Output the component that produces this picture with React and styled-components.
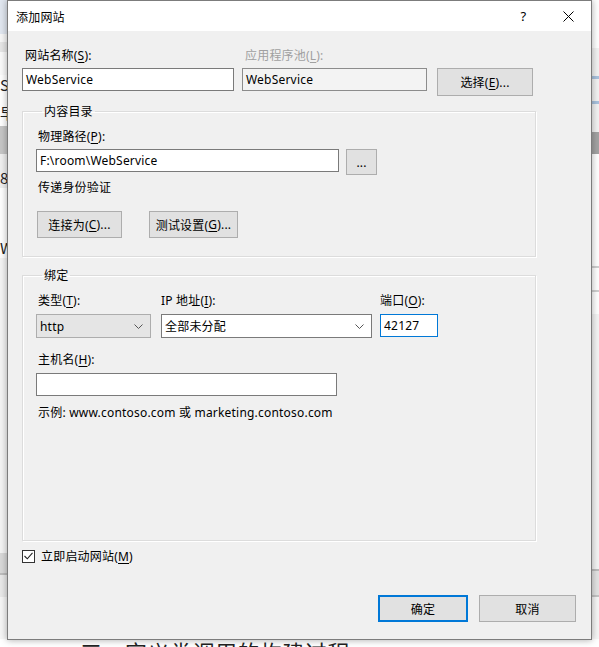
import React from 'react';
import styled, { createGlobalStyle } from 'styled-components';

const GlobalStyle = createGlobalStyle`
  html, body {
    margin: 0;
    padding: 0;
    background: #ffffff;
  }
  body {
    font-family: "Noto Sans", "Noto Sans CJK SC", sans-serif;
    font-size: 12px;
    letter-spacing: 0.2px;
    color: #000;
  }
`;

const Desktop = styled.div`
  position: relative;
  width: 599px;
  height: 647px;
  overflow: hidden;
  background: #ffffff;
`;

// the page behind the dialog
const BackPage = styled.div`
  display: flex;
  flex-direction: column;
  height: 100%;
`;

const BackTop = styled.div`
  display: flex;
  justify-content: space-between;
  height: 639px;
  flex-shrink: 0;
`;

const Strip = styled.div`
  display: flex;
  flex-direction: column;
  width: 40px;
  background: #f4f4f4;
`;

const StripBlock = styled.div`
  height: ${(p) => p.$h}px;
  flex-shrink: 0;
  width: 100%;
  background: ${(p) => p.$bg || 'transparent'};
  color: ${(p) => p.$color || '#222'};
  font-family: "Noto Sans CJK SC", sans-serif;
  font-size: 15px;
  font-weight: ${(p) => (p.$bold ? 700 : 400)};
  line-height: ${(p) => p.$h}px;
  padding-left: ${(p) => (p.$right ? 1 : 0)}px;
  text-align: ${(p) => (p.$right ? 'left' : 'right')};
  padding-right: ${(p) => (p.$right ? 0 : 33)}px;
  white-space: nowrap;
  overflow: hidden;
  box-sizing: border-box;
`;

const StripFill = styled.div`
  flex: 1;
  width: 100%;
`;

const Heading = styled.div`
  padding-left: 80px;
  margin-top: 0;
  font-family: "Noto Sans CJK SC", sans-serif;
  font-size: 22px;
  line-height: 24px;
  color: #222;
  white-space: nowrap;
  letter-spacing: 0.5px;
`;

const Dialog = styled.div`
  position: absolute;
  left: 7px;
  top: 0;
  width: 585px;
  height: 640px;
  box-sizing: border-box;
  border: 1px solid #7c7c7c;
  background: #f0f0f0;
  box-shadow: 0 0 7px rgba(0, 0, 0, 0.35);
  display: flex;
  flex-direction: column;
`;

const TitleBar = styled.div`
  height: 30px;
  background: #ffffff;
  display: flex;
  align-items: center;
  flex-shrink: 0;
`;

const Title = styled.div`
  flex: 1;
  padding-left: 8px;
  font-family: "Noto Sans CJK SC", sans-serif;
  font-size: 12px;
`;

const TitleButton = styled.div`
  width: 45px;
  height: 30px;
  display: flex;
  align-items: center;
  justify-content: center;
  font-size: 13px;
`;

const Body = styled.div`
  display: flex;
  flex-direction: column;
  padding: 17px 14px 0 14px;
  flex: 1;
`;

const Mn = styled.span`
  text-decoration: underline;
  text-underline-offset: 2px;
`;

const Label = styled.div`
  line-height: 16px;
  height: 16px;
  padding-left: ${(p) => p.$indent ?? 2}px;
  color: ${(p) => (p.$disabled ? '#a0a0a0' : '#000')};
  white-space: nowrap;
  margin-top: ${(p) => p.$mt || 0}px;
`;

const Field = styled.div`
  display: flex;
  flex-direction: column;
  gap: ${(p) => p.$gap || 4}px;
  width: ${(p) => p.$w}px;
  flex-shrink: 0;
  margin-left: ${(p) => p.$ml || 0}px;
`;

const TextBox = styled.div`
  box-sizing: border-box;
  width: ${(p) => p.$w}px;
  height: ${(p) => p.$h || 23}px;
  border: 1px solid ${(p) => (p.$focus ? '#0078d7' : p.$disabled ? '#8c8c8c' : '#7a7a7a')};
  background: ${(p) => (p.$disabled ? '#f3f3f3' : '#ffffff')};
  padding-left: 3px;
  display: flex;
  align-items: center;
  white-space: nowrap;
  font-size: 12px;
`;

const Select = styled.div`
  box-sizing: border-box;
  width: ${(p) => p.$w}px;
  height: 24px;
  border: 1px solid ${(p) => (p.$gray ? '#adadad' : '#7a7a7a')};
  background: ${(p) => (p.$gray ? '#e5e5e5' : '#ffffff')};
  padding: 0 7px 0 3px;
  display: flex;
  align-items: center;
  justify-content: space-between;
  font-size: 12px;
`;

const Button = styled.div`
  box-sizing: border-box;
  width: ${(p) => p.$w}px;
  height: ${(p) => p.$h || 27}px;
  border: ${(p) => (p.$primary ? '2px solid #0078d7' : '1px solid #adadad')};
  background: #e1e1e1;
  display: flex;
  align-items: center;
  justify-content: center;
  white-space: nowrap;
  flex-shrink: 0;
  margin-left: ${(p) => p.$ml || 0}px;
`;

const TopRow = styled.div`
  display: flex;
  align-items: flex-start;
`;

const ButtonSlot = styled.div`
  padding-top: 20px;
  margin-left: 10px;
`;

const Group = styled.fieldset`
  box-sizing: border-box;
  width: 514px;
  margin: ${(p) => p.$mt}px 0 0 0;
  padding: 10px 13px ${(p) => p.$pb}px 13px;
  border: 1px solid #dcdcdc;
  box-shadow: inset 1px 1px 0 #ffffff, 1px 1px 0 #ffffff;
  min-inline-size: 0;
  height: ${(p) => (p.$h ? `${p.$h}px` : 'auto')};
`;

const Legend = styled.legend`
  padding: 0 2px;
  margin-left: 6px;
  line-height: 16px;
  font-family: "Noto Sans CJK SC", sans-serif;
`;

const Row = styled.div`
  display: flex;
  align-items: flex-start;
  gap: ${(p) => p.$gap || 0}px;
  margin-top: ${(p) => p.$mt || 0}px;
`;

const CheckRow = styled.div`
  display: flex;
  align-items: center;
  gap: 6px;
  margin-top: 7px;
  height: 16px;
`;

const CheckBox = styled.div`
  width: 13px;
  height: 13px;
  box-sizing: border-box;
  border: 1px solid #333333;
  background: #ffffff;
  display: flex;
  align-items: center;
  justify-content: center;
`;

const Footer = styled.div`
  display: flex;
  justify-content: flex-end;
  gap: 11px;
  margin-top: 31px;
  padding-right: 1px;
`;

const Chevron = () => (
  <svg width="9" height="5" viewBox="0 0 9 5">
    <polyline points="0.5,0.5 4.5,4.5 8.5,0.5" fill="none" stroke="#555" strokeWidth="1" />
  </svg>
);

const leftBlocks = [
  { h: 34, bg: '#e1e7f0' },
  { h: 8, bg: '#f7f7f7' },
  { h: 10, bg: '#e6e6e6' },
  { h: 23, bg: '#fafafa' },
  { h: 20, bg: '#ffffff', text: 'S' },
  { h: 10, bg: '#ffffff' },
  { h: 16, bg: '#ffffff', text: '早' },
  { h: 5, bg: '#ffffff' },
  { h: 28, bg: '#c6c6c6' },
  { h: 14, bg: '#f0f0f0' },
  { h: 20, bg: '#f0f0f0', text: '8' },
  { h: 50, bg: '#ffffff' },
  { h: 20, bg: '#ffffff', text: 'We' },
];

const rightBlocks = [
  { h: 22, bg: '#ffffff', text: '千' },
  { h: 8, bg: '#ffffff' },
  { h: 18, bg: '#ffffff', text: '王' },
  { h: 28, bg: '#f2f2f2' },
  { h: 3, bg: '#a9c2de' },
  { h: 22, bg: '#f2f2f2' },
  { h: 3, bg: '#a9c2de' },
  { h: 28, bg: '#f2f2f2' },
  { h: 22, bg: '#a3a3a3' },
  { h: 6, bg: '#ffffff' },
  { h: 18, bg: '#ffffff', text: '服', bold: true },
  { h: 18, bg: '#ffffff', text: '启', color: '#3a78c2' },
  { h: 48, bg: '#ffffff' },
  { h: 22, bg: '#ffffff', text: '应', color: '#3a78c2' },
  { h: 2, bg: '#d0d0d0' },
  { h: 22, bg: '#ffffff', text: '网', color: '#3a78c2' },
  { h: 2, bg: '#d0d0d0' },
  { h: 22, bg: '#ffffff', text: '新', color: '#3a78c2' },
];

function App() {
  return (
    <Desktop>
      <GlobalStyle />
      <BackPage>
        <BackTop>
          <Strip>
            {leftBlocks.map((b, i) => (
              <StripBlock key={i} $h={b.h} $bg={b.bg} $color={b.color}>
                {b.text}
              </StripBlock>
            ))}
            <StripFill />
            <StripBlock $h={20} $bg="#d9d9d9" />
            <StripBlock $h={2} $bg="#bdbdbd" />
            <StripBlock $h={22} $bg="#e9e9e9" />
            <StripBlock $h={42} $bg="#f6f6f6" />
          </Strip>
          <Strip>
            {rightBlocks.map((b, i) => (
              <StripBlock
                key={i}
                $right
                $h={b.h}
                $bg={b.bg}
                $color={b.color}
                $bold={b.bold}
              >
                {b.text}
              </StripBlock>
            ))}
            <StripFill />
            <StripBlock $right $h={2} $bg="#bdbdbd" />
            <StripBlock $right $h={24} $bg="#e3e3e3" />
            <StripBlock $right $h={2} $bg="#c4c4c4" />
            <StripBlock $right $h={42} $bg="#f6f6f6" />
          </Strip>
        </BackTop>
        <Heading>三、定义类调用的构建过程</Heading>
      </BackPage>

      <Dialog>
        <TitleBar>
          <Title>添加网站</Title>
          <TitleButton>?</TitleButton>
          <TitleButton>
            <svg width="11" height="11" viewBox="0 0 11 11">
              <line x1="0.5" y1="0.5" x2="10.5" y2="10.5" stroke="#000" strokeWidth="1" />
              <line x1="10.5" y1="0.5" x2="0.5" y2="10.5" stroke="#000" strokeWidth="1" />
            </svg>
          </TitleButton>
        </TitleBar>

        <Body>
          <TopRow>
            <Field $w={212}>
              <Label $indent={3}>
                网站名称(<Mn>S</Mn>):
              </Label>
              <TextBox $w={212}>WebService</TextBox>
            </Field>
            <Field $w={185} $ml={8}>
              <Label $indent={3} $disabled>
                应用程序池(<Mn>L</Mn>):
              </Label>
              <TextBox $w={185} $disabled>
                WebService
              </TextBox>
            </Field>
            <ButtonSlot>
              <Button $w={96} $h={28}>
                选择(<Mn>E</Mn>)...
              </Button>
            </ButtonSlot>
          </TopRow>

          <Group $mt={7} $pb={18}>
            <Legend>内容目录</Legend>
            <Label>
              物理路径(<Mn>P</Mn>):
            </Label>
            <Row $gap={7} $mt={4}>
              <TextBox $w={303}>F:\room\WebService</TextBox>
              <Button $w={31} $h={26}>
                ...
              </Button>
            </Row>
            <Label $mt={5}>传递身份验证</Label>
            <Row $gap={27} $mt={15}>
              <Button $w={85} $ml={1}>
                连接为(<Mn>C</Mn>)...
              </Button>
              <Button $w={89}>
                测试设置(<Mn>G</Mn>)...
              </Button>
            </Row>
          </Group>

          <Group $mt={10} $pb={0} $h={274}>
            <Legend>绑定</Legend>
            <Row>
              <Field $w={115} $gap={5}>
                <Label>
                  类型(<Mn>T</Mn>):
                </Label>
                <Select $w={115} $gray>
                  <span>http</span>
                  <Chevron />
                </Select>
              </Field>
              <Field $w={211} $gap={5} $ml={10}>
                <Label $indent={0}>
                  IP 地址(<Mn>I</Mn>):
                </Label>
                <Select $w={211}>
                  <span>全部未分配</span>
                  <Chevron />
                </Select>
              </Field>
              <Field $w={58} $gap={5} $ml={8}>
                <Label $indent={0}>
                  端口(<Mn>O</Mn>):
                </Label>
                <TextBox $w={58} $focus>
                  42127
                </TextBox>
              </Field>
            </Row>
            <Label $mt={14}>
              主机名(<Mn>H</Mn>):
            </Label>
            <Row $mt={5}>
              <TextBox $w={301} />
            </Row>
            <Label $mt={9}>示例: www.contoso.com 或 marketing.contoso.com</Label>
          </Group>

          <CheckRow>
            <CheckBox>
              <svg width="9" height="8" viewBox="0 0 9 8">
                <polyline points="0.5,4 3.3,6.8 8.5,0.8" fill="none" stroke="#222" strokeWidth="1.1" />
              </svg>
            </CheckBox>
            <span>
              立即启动网站(<Mn>M</Mn>)
            </span>
          </CheckRow>

          <Footer>
            <Button $w={90} $primary>
              确定
            </Button>
            <Button $w={97}>取消</Button>
          </Footer>
        </Body>
      </Dialog>
    </Desktop>
  );
}

export default App;
